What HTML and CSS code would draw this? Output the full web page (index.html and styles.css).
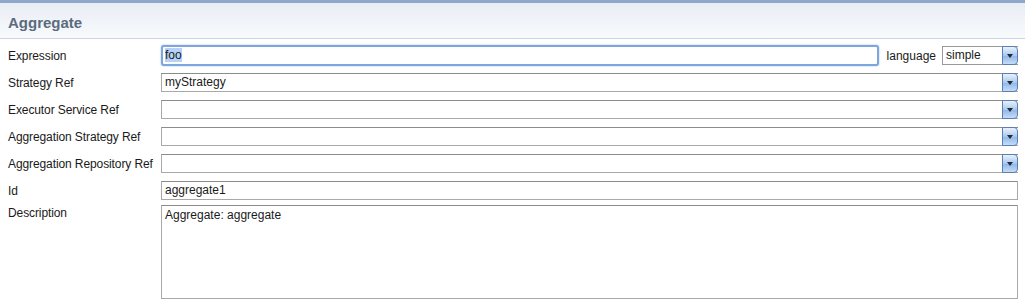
FILE: index.html
```html
<!DOCTYPE html>
<html>
<head>
<meta charset="UTF-8">
<title>Aggregate</title>
<link rel="stylesheet" href="styles.css">
</head>
<body>
<div class="panel">
	<div class="panel-head">Aggregate</div>
	<div class="form">
		<div class="row">
			<label>Expression</label>
			<div class="field focus"><span class="sel">foo</span></div>
			<span class="lang">language</span>
			<div class="combo small"><span class="val">simple</span><span class="btn"></span></div>
		</div>
		<div class="row">
			<label>Strategy Ref</label>
			<div class="combo"><span class="val">myStrategy</span><span class="btn"></span></div>
		</div>
		<div class="row">
			<label>Executor Service Ref</label>
			<div class="combo"><span class="val"></span><span class="btn"></span></div>
		</div>
		<div class="row">
			<label>Aggregation Strategy Ref</label>
			<div class="combo"><span class="val"></span><span class="btn"></span></div>
		</div>
		<div class="row">
			<label>Aggregation Repository Ref</label>
			<div class="combo"><span class="val"></span><span class="btn"></span></div>
		</div>
		<div class="row">
			<label>Id</label>
			<div class="field">aggregate1</div>
		</div>
		<div class="row area-row">
			<label>Description</label>
			<div class="field area">Aggregate: aggregate</div>
		</div>
	</div>
</div>
</body>
</html>
```

FILE: styles.css
```css
*{
	margin:0;
	padding:0;
	box-sizing:border-box;
}
body{
	font-family:"Liberation Sans",Arial,sans-serif;
	font-size:12px;
	color:#1a1a1a;
	background:#fff;
	overflow:hidden;
}
.panel{
	border-top:3px solid #8ea7cd;
}
.panel-head{
	height:36px;
	line-height:32px;
	padding:4px 0 0 8px;
	font-size:15px;
	font-weight:bold;
	color:#5b6b7e;
	background:linear-gradient(#e8edf5,#f8fafc);
	border-bottom:1px solid #c8d5e8;
}
.form{
	padding:3px 7px 0 8px;
}
.row{
	display:flex;
	align-items:center;
	height:27px;
}
.row > label{
	width:153px;
	flex:none;
	letter-spacing:-0.1px;
}
.field,
.combo{
	flex:1;
	height:19px;
	border:1px solid #a9a9a9;
	border-top-color:#8c8c8c;
	background:#fff;
	padding-left:3px;
	line-height:17px;
}
.field.focus{
	height:21px;
	margin-right:8px;
	border:2px solid #7ea6dc;
	border-radius:3px;
	box-shadow:0 0 2px #9dbbe6;
	padding-left:2px;
	line-height:17px;
}
.sel{
	background:#b5d3f7;
}
.lang{
	flex:none;
	margin-right:6px;
}
.combo{
	display:flex;
	padding-right:0;
	border-right:none;
}
.combo.small{
	flex:none;
	width:76px;
	border-color:#999;
}
.combo .val{
	flex:1;
}
.combo .btn{
	flex:none;
	width:16px;
	height:19px;
	margin-top:-1px;
	border:1px solid #5b7fb5;
	border-radius:0 4px 4px 0;
	background:linear-gradient(#e9f2fd,#a9c9ee 50%,#8db6e9 51%,#c6dcf6);
	position:relative;
}
.combo .btn:after{
	content:'';
	position:absolute;
	left:4px;
	top:7px;
	border:3px solid transparent;
	border-top:4px solid #1e2a3a;
	border-bottom:none;
}
.area-row{
	align-items:flex-start;
	height:auto;
	padding-top:1px;
}
.area-row > label{
	padding-top:1px;
}
.field.area{
	height:94px;
	padding-top:1px;
}
```
